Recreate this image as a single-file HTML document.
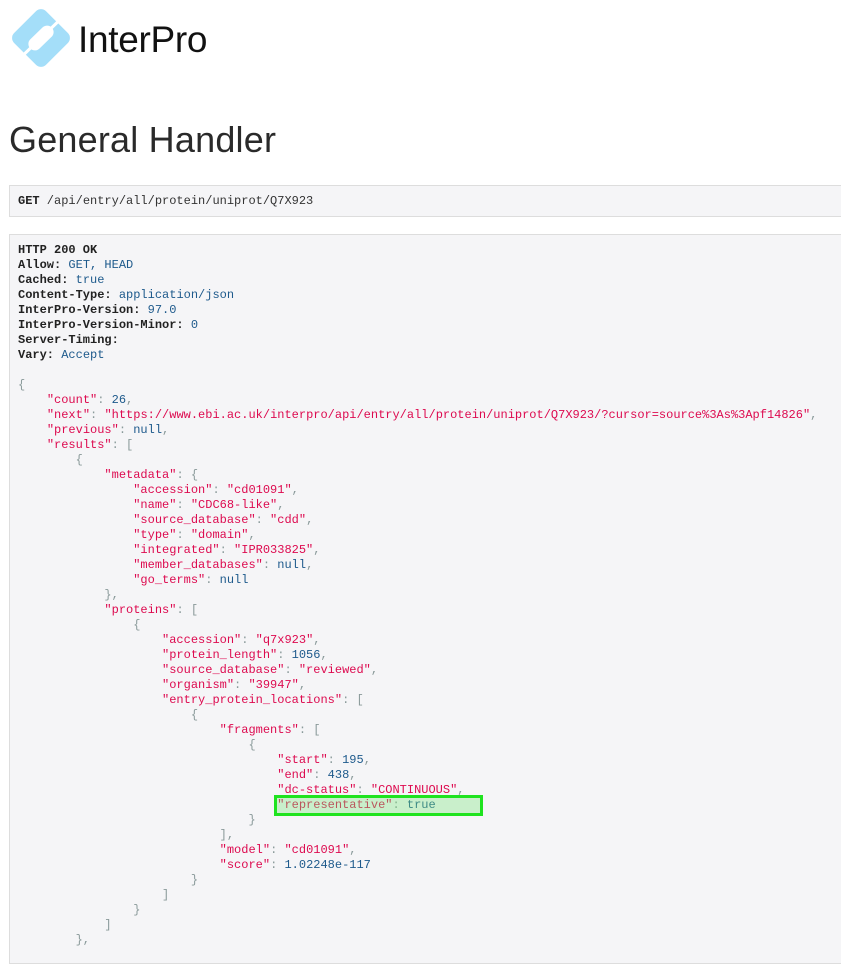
<!DOCTYPE html>
<html><head><meta charset="utf-8">
<style>
body{margin:0;background:#fff;font-family:"Liberation Sans",sans-serif;overflow:hidden;width:841px;height:948px;position:relative}
.logo{position:absolute;left:5px;top:3px}
.lt{position:absolute;left:78px;top:19px;font-size:37px;color:#111;letter-spacing:-0.3px}
h1{position:absolute;left:9px;top:119px;margin:0;font-weight:300;font-size:36px;color:#2a2a2a;letter-spacing:0.2px}
pre{margin:0;font-family:"Liberation Mono",monospace;font-size:12px;line-height:15px;color:#333}
.box{position:absolute;left:9px;width:850px;background:#f5f5f7;border:1px solid #ddd;box-sizing:border-box;padding-left:8px}
b{color:#222}
.k{color:#dd0a4f}.n{color:#1e5a8c}.p{color:#8a9a9a}
.hl{position:absolute;left:274px;top:795px;width:209px;height:21px;box-sizing:border-box;border:3px solid #1fe31f;background:rgba(120,230,120,0.35)}
</style></head><body>
<svg class="logo" width="75" height="72" viewBox="0 0 75 72">
<rect x="13.5" y="12.5" width="45" height="45" rx="7" transform="rotate(45 36 35)" fill="#a4def9"/>
<line x1="62" y1="10" x2="10" y2="60" stroke="#fff" stroke-width="3"/>
<rect x="21" y="28.5" width="30" height="13" rx="6.5" transform="rotate(-44 36 35)" fill="#fff"/>
</svg>
<div class="lt">InterPro</div>
<h1>General Handler</h1>
<div class="box" style="top:185px;height:32px;padding-top:8px"><pre><b>GET</b> /api/entry/all/protein/uniprot/Q7X923</pre></div>
<div class="box" style="top:234px;height:730px;padding-top:8px"><pre><b>HTTP 200 OK</b>
<b>Allow:</b> <span class="n">GET, HEAD</span>
<b>Cached:</b> <span class="n">true</span>
<b>Content-Type:</b> <span class="n">application/json</span>
<b>InterPro-Version:</b> <span class="n">97.0</span>
<b>InterPro-Version-Minor:</b> <span class="n">0</span>
<b>Server-Timing:</b>
<b>Vary:</b> <span class="n">Accept</span>

<span class="p">{</span>
    <span class="k">"count"</span><span class="p">:</span> <span class="n">26</span><span class="p">,</span>
    <span class="k">"next"</span><span class="p">:</span> <span class="k">"https://www.ebi.ac.uk/interpro/api/entry/all/protein/uniprot/Q7X923/?cursor=source%3As%3Apf14826"</span><span class="p">,</span>
    <span class="k">"previous"</span><span class="p">:</span> <span class="n">null</span><span class="p">,</span>
    <span class="k">"results"</span><span class="p">: [</span>
        <span class="p">{</span>
            <span class="k">"metadata"</span><span class="p">: {</span>
                <span class="k">"accession"</span><span class="p">:</span> <span class="k">"cd01091"</span><span class="p">,</span>
                <span class="k">"name"</span><span class="p">:</span> <span class="k">"CDC68-like"</span><span class="p">,</span>
                <span class="k">"source_database"</span><span class="p">:</span> <span class="k">"cdd"</span><span class="p">,</span>
                <span class="k">"type"</span><span class="p">:</span> <span class="k">"domain"</span><span class="p">,</span>
                <span class="k">"integrated"</span><span class="p">:</span> <span class="k">"IPR033825"</span><span class="p">,</span>
                <span class="k">"member_databases"</span><span class="p">:</span> <span class="n">null</span><span class="p">,</span>
                <span class="k">"go_terms"</span><span class="p">:</span> <span class="n">null</span>
            <span class="p">},</span>
            <span class="k">"proteins"</span><span class="p">: [</span>
                <span class="p">{</span>
                    <span class="k">"accession"</span><span class="p">:</span> <span class="k">"q7x923"</span><span class="p">,</span>
                    <span class="k">"protein_length"</span><span class="p">:</span> <span class="n">1056</span><span class="p">,</span>
                    <span class="k">"source_database"</span><span class="p">:</span> <span class="k">"reviewed"</span><span class="p">,</span>
                    <span class="k">"organism"</span><span class="p">:</span> <span class="k">"39947"</span><span class="p">,</span>
                    <span class="k">"entry_protein_locations"</span><span class="p">: [</span>
                        <span class="p">{</span>
                            <span class="k">"fragments"</span><span class="p">: [</span>
                                <span class="p">{</span>
                                    <span class="k">"start"</span><span class="p">:</span> <span class="n">195</span><span class="p">,</span>
                                    <span class="k">"end"</span><span class="p">:</span> <span class="n">438</span><span class="p">,</span>
                                    <span class="k">"dc-status"</span><span class="p">:</span> <span class="k">"CONTINUOUS"</span><span class="p">,</span>
                                    <span class="k">"representative"</span><span class="p">:</span> <span class="n">true</span>
                                <span class="p">}</span>
                            <span class="p">],</span>
                            <span class="k">"model"</span><span class="p">:</span> <span class="k">"cd01091"</span><span class="p">,</span>
                            <span class="k">"score"</span><span class="p">:</span> <span class="n">1.02248e-117</span>
                        <span class="p">}</span>
                    <span class="p">]</span>
                <span class="p">}</span>
            <span class="p">]</span>
        <span class="p">},</span></pre></div>
<div class="hl"></div>
</body></html>
